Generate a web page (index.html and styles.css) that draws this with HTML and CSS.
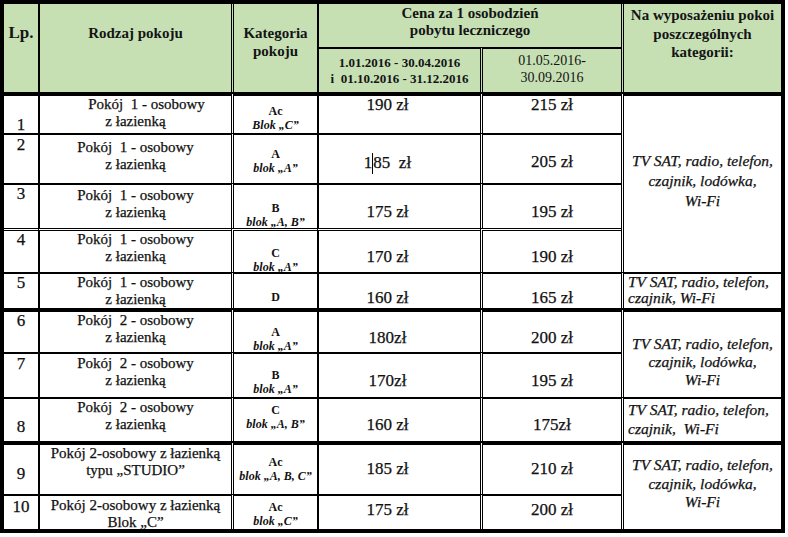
FILE: index.html
```html
<!DOCTYPE html>
<html lang="pl">
<head>
<meta charset="utf-8">
<title>Cennik pokoi</title>
<link rel="stylesheet" href="styles.css">
</head>
<body>
<div class="sheet">
  <div class="row hdr">
    <div class="c lp h-lp">Lp.</div>
    <div class="c rodzaj k2 h-rodzaj">Rodzaj pokoju</div>
    <div class="c kat k3 h-kat">Kategoria<br>pokoju</div>
    <div class="c cena-h k4">Cena za 1 osobodzień<br>pobytu leczniczego</div>
    <div class="c na k6 h-na">Na wyposażeniu pokoi<br>poszczególnych<br>kategorii:</div>
    <div class="c d1 k4">1.01.2016 - 30.04.2016<br>i&nbsp; 01.10.2016 - 31.12.2016</div>
    <div class="c d2 k5">01.05.2016-<br>30.09.2016</div>
  </div>

  <div class="row r1">
    <div class="c lp">1</div>
    <div class="c rodzaj k2"><span class="shift">Pokój&nbsp; 1 - osobowy</span><br>z łazienką</div>
    <div class="c kat k3">Ac<br><i>Blok „C”</i></div>
    <div class="c cena k4">190 zł</div>
    <div class="c cena2 k5">215 zł</div>
    <div class="c na k6 na1">TV SAT, radio, telefon,<br>czajnik, lodówka,<br>Wi-Fi</div>
  </div>

  <div class="row r2">
    <div class="c lp">2</div>
    <div class="c rodzaj k2">Pokój&nbsp; 1 - osobowy<br>z łazienką</div>
    <div class="c kat k3">A<br><i>blok „A”</i></div>
    <div class="c cena k4">1<span class="caret"></span>85&nbsp; zł</div>
    <div class="c cena2 k5">205 zł</div>
  </div>

  <div class="row r3">
    <div class="c lp">3</div>
    <div class="c rodzaj k2">Pokój&nbsp; 1 - osobowy<br>z łazienką</div>
    <div class="c kat k3">B<br><i>blok „A, B”</i></div>
    <div class="c cena k4">175 zł</div>
    <div class="c cena2 k5">195 zł</div>
  </div>

  <div class="row r4">
    <div class="c lp">4</div>
    <div class="c rodzaj k2">Pokój&nbsp; 1 - osobowy<br>z łazienką</div>
    <div class="c kat k3">C<br><i>blok „A”</i></div>
    <div class="c cena k4">170 zł</div>
    <div class="c cena2 k5">190 zł</div>
  </div>

  <div class="row r5">
    <div class="c lp">5</div>
    <div class="c rodzaj k2">Pokój&nbsp; 1 - osobowy<br>z łazienką</div>
    <div class="c kat k3">D</div>
    <div class="c cena k4">160 zł</div>
    <div class="c cena2 k5">165 zł</div>
    <div class="c na k6 na-l na5">TV SAT, radio, telefon,<br>czajnik, Wi-Fi</div>
  </div>

  <div class="row r6">
    <div class="c lp">6</div>
    <div class="c rodzaj k2">Pokój&nbsp; 2 - osobowy<br>z łazienką</div>
    <div class="c kat k3">A<br><i>blok „A”</i></div>
    <div class="c cena k4">180zł</div>
    <div class="c cena2 k5">200 zł</div>
    <div class="c na k6 na6">TV SAT, radio, telefon,<br>czajnik, lodówka,<br>Wi-Fi</div>
  </div>

  <div class="row r7">
    <div class="c lp">7</div>
    <div class="c rodzaj k2">Pokój&nbsp; 2 - osobowy<br>z łazienką</div>
    <div class="c kat k3">B<br><i>blok „A”</i></div>
    <div class="c cena k4">170zł</div>
    <div class="c cena2 k5">195 zł</div>
  </div>

  <div class="row r8">
    <div class="c lp">8</div>
    <div class="c rodzaj k2">Pokój&nbsp; 2 - osobowy<br>z łazienką</div>
    <div class="c kat k3">C<br><i>blok „A, B”</i></div>
    <div class="c cena k4">160 zł</div>
    <div class="c cena2 k5">175zł</div>
    <div class="c na k6 na-l na8">TV SAT, radio, telefon,<br>czajnik,&nbsp; Wi-Fi</div>
  </div>

  <div class="row r9">
    <div class="c lp">9</div>
    <div class="c rodzaj k2">Pokój 2-osobowy z łazienką<br>typu „STUDIO”</div>
    <div class="c kat k3">Ac<br><i>blok „A, B, C”</i></div>
    <div class="c cena k4">185 zł</div>
    <div class="c cena2 k5">210 zł</div>
    <div class="c na k6 na9">TV SAT, radio, telefon,<br>czajnik, lodówka,<br>Wi-Fi</div>
  </div>

  <div class="row r10">
    <div class="c lp">10</div>
    <div class="c rodzaj k2">Pokój 2-osobowy z łazienką<br>Blok „C”</div>
    <div class="c kat k3">Ac<br><i>blok „C”</i></div>
    <div class="c cena k4">175 zł</div>
    <div class="c cena2 k5">200 zł</div>
  </div>
</div>
</body>
</html>
```

FILE: styles.css
```css
html, body {
  margin: 0;
  padding: 0;
  background: #ffffff;
}

body {
  font-family: "Liberation Serif", "Times New Roman", "DejaVu Serif", serif;
  color: #111;
}

.sheet {
  display: grid;
  grid-template-columns: 34px 193px 86px 163px 141px 160px;
  grid-template-rows: 43px 45px 41px 50px 45px 44px 36px 44px 45px 44px 53px 35px;
  border: 4px solid #000;
  width: max-content;
}

.row {
  display: contents;
}

.c {
  box-sizing: border-box;
  font-family: "Liberation Serif", "Times New Roman", serif;
  text-align: center;
  white-space: nowrap;
  font-size: 15px;
  line-height: 17px;
  border-top: 2px solid #000;
  -webkit-text-stroke: 0.25px #111;
}

/* column left borders */
.k2 { border-left: 2px solid #000; }
.k3 { border-left: 3px double #000; }
.k4 { border-left: 2px solid #000; }
.k5 { border-left: 3px double #000; }
.k6 { border-left: 3px double #000; }

/* header */
.hdr .c {
  background: #c6e0b4;
  font-weight: bold;
  color: #141414;
  border-top: none;
  -webkit-text-stroke: 0;
}
.hdr .d1, .hdr .d2 {
  border-top: 2px solid #000;
}
.h-lp, .h-rodzaj, .h-kat, .h-na {
  grid-row: span 2;
}
.cena-h {
  grid-column: span 2;
  padding-top: 1px;
}
.hdr .h-lp { padding-top: 20px; }
.hdr .h-rodzaj { padding-top: 21px; }
.hdr .h-kat {
  padding-top: 20px;
  font-size: 15px;
  line-height: 18px;
}
.hdr .h-na {
  padding-top: 2px;
  font-size: 15px;
  font-style: normal;
  line-height: 18.5px;
}
.hdr .d1 {
  font-size: 13px;
  line-height: 16px;
  padding-top: 6px;
}
.hdr .d2 {
  font-size: 14px;
  font-weight: normal;
  line-height: 17px;
  padding-top: 3px;
}

/* row top borders */
.r1 .c { border-top: 4px solid #000; }
.r4 .c { border-top: 3px double #000; }
.r6 .c { border-top: 4px solid #000; }
.r9 .c { border-top: 4px solid #000; }

/* number column */
.lp {
  font-size: 17px;
}

/* category column */
.kat {
  font-size: 12px;
  line-height: 14px;
  font-weight: bold;
  -webkit-text-stroke: 0;
}
.kat i {
  font-style: italic;
}

/* prices */
.cena, .cena2 {
  font-size: 17px;
}
.cena {
  padding-right: 24px;
}
.caret {
  display: inline-block;
  width: 0;
  height: 21px;
  border-left: 1px solid #000;
  vertical-align: -6px;
}

.shift {
  padding-left: 22px;
}

/* equipment column */
.na {
  font-style: italic;
  font-size: 15.5px;
}
.na1 { grid-row: span 4; padding-top: 55px; line-height: 20px; }
.na5 { padding-top: 0; line-height: 16px; }
.na6 { grid-row: span 2; padding-top: 23px; line-height: 18px; }
.na8 { padding-top: 1px; line-height: 19px; }
.na9 { grid-row: span 2; padding-top: 11px; line-height: 18.5px; }
.na-l {
  text-align: left;
  padding-left: 4px;
}

/* vertical positions per row */
.r1 .lp { padding-top: 20px; }
.r2 .lp { padding-top: 1px; }
.r7 .lp { padding-top: 1px; }
.r8 .lp { padding-top: 19px; }
.r9 .lp { padding-top: 20px; }
.r10 .lp { padding-top: 2px; }

.r2 .rodzaj { padding-top: 4px; }
.r3 .rodzaj { padding-top: 2px; }
.r7 .rodzaj { padding-top: 1px; }
.r10 .rodzaj { padding-top: 1px; }

.r1 .kat { padding-top: 8px; }
.r2 .kat { padding-top: 12px; }
.r3 .kat { padding-top: 16px; }
.r4 .kat { padding-top: 15px; }
.r5 .kat { padding-top: 16px; }
.r6 .kat { padding-top: 13px; }
.r7 .kat { padding-top: 14px; }
.r8 .kat { padding-top: 4px; }
.r9 .kat { padding-top: 10px; }
.r10 .kat { padding-top: 4px; }

.r1 .cena, .r1 .cena2 { padding-top: 0; }
.r2 .cena, .r2 .cena2 { padding-top: 18px; }
.r3 .cena, .r3 .cena2 { padding-top: 18px; }
.r4 .cena, .r4 .cena2 { padding-top: 17px; }
.r5 .cena, .r5 .cena2 { padding-top: 15px; }
.r6 .cena, .r6 .cena2 { padding-top: 17px; }
.r7 .cena, .r7 .cena2 { padding-top: 18px; }
.r8 .cena, .r8 .cena2 { padding-top: 17px; }
.r9 .cena, .r9 .cena2 { padding-top: 15px; }
.r10 .cena, .r10 .cena2 { padding-top: 5px; }
```
